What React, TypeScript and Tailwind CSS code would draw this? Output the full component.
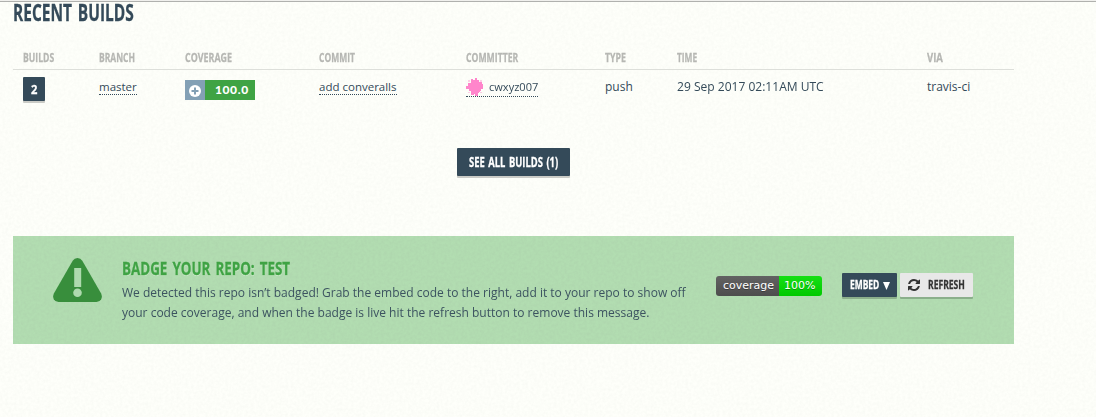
import { useLayoutEffect, useRef, useState } from "react";

type FitProps = { text: string; width: number; className?: string };

/* Condensed lettering: the text is narrowed to the given width. */
function Fit({ text, width, className = "" }: FitProps) {
  const ref = useRef<HTMLSpanElement>(null);
  const [scale, setScale] = useState(1);
  useLayoutEffect(() => {
    if (ref.current) setScale(width / ref.current.offsetWidth);
  }, [text, width]);
  return (
    <span className={"block overflow-visible " + className} style={{ width }}>
      <span
        ref={ref}
        className="inline-block origin-left whitespace-nowrap"
        style={{ transform: `scaleX(${scale})` }}
      >
        {text}
      </span>
    </span>
  );
}

const headers: [string, number][] = [
  ["BUILDS", 31],
  ["BRANCH", 36],
  ["COVERAGE", 47],
  ["COMMIT", 36],
  ["COMMITTER", 52],
  ["TYPE", 21],
  ["TIME", 20],
  ["VIA", 16],
];

const cols = "grid grid-cols-[76px_86px_134px_147px_139px_72px_250px_97px]";
const link = "border-b border-dotted border-[#344a59]";
const heavy = "font-bold [word-spacing:0.12em] [-webkit-text-stroke:0.3px_currentColor]";

function Texture({ id, className }: { id: string; className: string }) {
  return (
    <svg className={"pointer-events-none absolute inset-0 h-full w-full " + className} aria-hidden="true">
      <filter id={id} x="0" y="0" width="100%" height="100%">
        <feTurbulence type="fractalNoise" baseFrequency="0.35" numOctaves="2" seed="4" />
        <feColorMatrix values="0 0 0 0 0.3  0 0 0 0 0.35  0 0 0 0 0.3  1.6 0 0 0 -0.5" />
      </filter>
      <rect width="100%" height="100%" filter={`url(#${id})`} />
    </svg>
  );
}

function Avatar() {
  return (
    <svg width="18" height="18" viewBox="0 0 18 18" fill="#ff85cb">
      <path d="M5 4h9v10H5z" />
      <path d="M5 1h2v1h2V0h2v2h2v3H5zM5 13h8v2h-1v3H9v-2H8v1H5zM2 5h4v8H3v-2H0V8h2zM13 4h3v2h1v5h-2v2h-3z" />
      <path d="M2 2h2v2H2zM14 2h2v2h-2zM2 14h2v1H2zM14 14h2v1h-2z" opacity="0.4" />
    </svg>
  );
}

export default function App() {
  return (
    <div className="relative h-[417px] w-[1096px] overflow-hidden bg-[#fefffa] font-['Open_Sans',sans-serif] text-[12px] text-[#344a59]">
      <Texture id="paper" className="opacity-[0.05]" />
      <main className="relative flex h-full flex-col border-t border-[#f0f0ed]">
        <div className="h-px shrink-0 bg-[#b0b1ae]" />
        <div className="ml-[13px] w-[1001px]">
          <h2 className={"h-[44px] text-[22.5px] leading-[22px] " + heavy}>
            <Fit text="RECENT BUILDS" width={121} />
          </h2>

          <div className={cols + " h-[24px] border-b border-[#dddfda] pt-[3px] text-[12.5px] leading-[17px] text-[#b6b7b3] " + heavy}>
            {headers.map(([name, width]) => (
              <div key={name} className="pl-[10px]">
                <Fit text={name} width={width} />
              </div>
            ))}
          </div>

          <div className={cols + " h-[78px] leading-[17px]"}>
            <div className="pt-[7px] pl-[10px]">
              <div className={"flex h-[24px] w-[22px] items-center justify-center rounded-[1px] bg-[#344a59] text-[13px] text-white shadow-[0_2px_0_#cacbc6] " + heavy}>
                <Fit text="2" width={6} />
              </div>
            </div>
            <div className="pt-[8px] pl-[10px]">
              <span className={link + " block h-[17px] w-[38px]"}>
                <Fit text="master" width={38} className="text-[11.5px]" />
              </span>
            </div>
            <div className="pt-[10px] pl-[10px]">
              <div className="flex h-[20px] w-[70px]">
                <div className="flex w-[20px] items-center justify-center bg-[#83a0b5] pt-[1px]">
                  <svg width="12" height="12" viewBox="0 0 12 12">
                    <circle cx="6" cy="6" r="6" fill="white" />
                    <path d="M6 2.5v7M2.5 6h7" stroke="#83a0b5" strokeWidth="2" />
                  </svg>
                </div>
                <div className="flex w-[50px] justify-end bg-[#3fa344] pr-[6px] font-['Lato',sans-serif] text-[12px] leading-[20px] font-black tracking-[0.6px] text-white">
                  <Fit text="100.0" width={34} />
                </div>
              </div>
            </div>
            <div className="pt-[8px] pl-[10px]">
              <span className={link + " block h-[17px] w-[78px]"}>
                <Fit text="add converalls" width={78} className="text-[11.5px]" />
              </span>
            </div>
            <div className="pt-[8px] pl-[10px]">
              <span className={link + " flex h-[19px] w-[72px] gap-[5px]"}>
                <Avatar />
                <Fit text="cwxyz007" width={49} className="text-[11.5px]" />
              </span>
            </div>
            <div className="pt-[8px] pl-[10px]"><Fit text="push" width={28} /></div>
            <div className="pt-[8px] pl-[10px]"><Fit text="29 Sep 2017 02:11AM UTC" width={146.5} /></div>
            <div className="pt-[8px] pl-[10px]"><Fit text="travis-ci" width={43} /></div>
          </div>

          <div className="flex h-[88px] justify-center">
            <button className={"flex h-[28px] w-[113px] items-center justify-center rounded-[1px] bg-[#344a59] text-[13.5px] text-white shadow-[0_2px_0_#cacbc6] " + heavy}>
              <Fit text="SEE ALL BUILDS (1)" width={89} className="text-left" />
            </button>
          </div>

          <section className="relative flex h-[108px] bg-[#b2ddb1]">
            <Texture id="felt" className="opacity-[0.12]" />
            <svg className="relative mt-[22px] ml-[40px] shrink-0" width="49" height="44" viewBox="0 0 49 44">
              <path d="M19.7 2.8Q21.4 0 24.5 0t4.8 2.8L48 35.2q1.6 3.2.2 6Q46.7 44 43.5 44h-38Q2.3 44 .8 41.2q-1.4-2.8.2-6z" fill="#388e3c" />
              <path d="M21.2 10h7v19h-7z" fill="#aedaae" />
              <circle cx="24.5" cy="34.8" r="4.3" fill="#aedaae" />
            </svg>
            <div className="relative ml-[20px] w-[594px] pt-[20px]">
              <h3 className={"h-[27px] text-[18px] leading-[24px] text-[#3fa344] [text-shadow:0_1px_0_#cde9ca] " + heavy}>
                <Fit text="BADGE YOUR REPO: TEST" width={168} />
              </h3>
              <div className="leading-[20px] text-[#3c5360]">
                <Fit text="We detected this repo isn’t badged! Grab the embed code to the right, add it to your repo to show off" width={563.5} />
                <Fit text="your code coverage, and when the badge is live hit the refresh button to remove this message." width={527.5} />
              </div>
            </div>
            <div className="relative mt-[40px] flex h-[20px] w-[106px] overflow-hidden rounded-[3px] font-['DejaVu_Sans',sans-serif] text-[11px] leading-[20px] text-white [text-shadow:0_1px_0_rgba(1,1,1,0.3)]">
              <div className="w-[63px] bg-linear-to-b from-[#626262] to-[#4d4d4d] pl-[7px]"><Fit text="coverage" width={51} /></div>
              <div className="w-[43px] bg-linear-to-b from-[#15df14] to-[#00c900] pl-[5px]"><Fit text="100%" width={31} /></div>
            </div>
            <div className={"relative mt-[37px] ml-[20px] flex gap-[3px] text-[12.5px] " + heavy}>
              <button className="flex h-[24px] w-[55px] items-center rounded-[1px] bg-[#344a59] pl-[8px] text-white shadow-[0_2px_0_#8baf8b]">
                <Fit text="EMBED" width={29} className="pt-px text-left" />
                <svg className="mt-[2px] ml-[4px]" width="7" height="8" viewBox="0 0 7 8"><path d="M0 0h7L3.5 8z" fill="white" /></svg>
              </button>
              <button className="flex h-[24px] w-[73px] items-center rounded-[1px] bg-[#e8e8e8] pl-[8px] text-[#333] shadow-[0_2px_0_#8baf8b]">
                <svg className="mr-[8px] shrink-0" width="12" height="12" viewBox="0 0 1536 1536" fill="#333">
                  <path d="M1511 928q0 5-1 7-64 268-268 434.500T764 1536q-146 0-282.500-55T238 1324l-129 129q-19 19-45 19t-45-19-19-45V960q0-26 19-45t45-19h448q26 0 45 19t19 45-19 45l-137 137q71 66 161 102t187 36q134 0 250-65t186-179q11-17 53-117 8-23 30-23h192q13 0 22.500 9.500t9.500 22.500zm25-800v448q0 26-19 45t-45 19h-448q-26 0-45-19t-19-45 19-45l138-138Q969 256 768 256q-134 0-250 65T332 500q-11 17-53 117-8 23-30 23H50q-13 0-22.500-9.500T18 608v-7q65-268 270-434.500T768 0q146 0 284 55.500T1297 212l130-129q19-19 45-19t45 19 19 45z" />
                </svg>
                <Fit text="REFRESH" width={37} className="pt-px text-left" />
              </button>
            </div>
          </section>
        </div>
      </main>
    </div>
  );
}
